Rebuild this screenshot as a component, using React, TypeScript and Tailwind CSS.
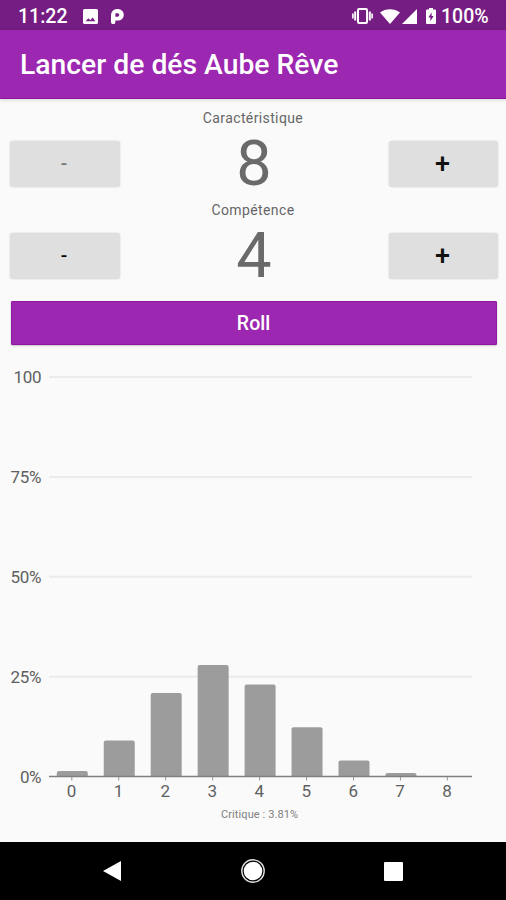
import { useState } from "react";

const PLOT_LEFT = 49;
const PLOT_RIGHT = 472;
const PLOT_TOP = 22;
const PLOT_BOTTOM = 421.5;
const STEP = 46.95;

const odds = [1.4, 9, 20.9, 27.9, 23, 12.3, 4, 0.9, 0];

const gridLines = [
  { label: "100", value: 100, width: 28 },
  { label: "75%", value: 75, width: 31 },
  { label: "50%", value: 50, width: 31 },
  { label: "25%", value: 25, width: 31 },
  { label: "0%", value: 0, width: 21.5 },
];

const yOf = (value: number) => PLOT_BOTTOM - ((PLOT_BOTTOM - PLOT_TOP) * value) / 100;

// Bar with only its top corners rounded
function barPath(x: number, value: number) {
  const y = yOf(value);
  const r = Math.min(2, PLOT_BOTTOM - y);
  return `M${x} ${PLOT_BOTTOM}V${y + r}q0 ${-r} ${r} ${-r}h${31 - 2 * r}q${r} 0 ${r} ${r}V${PLOT_BOTTOM}z`;
}

function StatusBar() {
  return (
    <div className="flex h-[30px] items-center bg-[#751d82] pt-[2px] pl-[18px] text-[19.5px] font-medium text-white">
      <span className="w-[50px] pt-[2px] whitespace-nowrap">11:22</span>
      <svg className="ml-[15px]" width="15" height="15" viewBox="0 0 15 15">
        <path
          fillRule="evenodd"
          fill="#fff"
          d="M1.5 0h12A1.5 1.5 0 0 1 15 1.5v12a1.5 1.5 0 0 1-1.5 1.5h-12A1.5 1.5 0 0 1 0 13.5v-12A1.5 1.5 0 0 1 1.5 0zM2.6 12.2h9.8L9.6 8.6 7.3 11.3 5.4 9.3z"
        />
      </svg>
      <svg className="ml-[13px]" width="13" height="15" viewBox="0 0 13 15" fill="#fff">
        <path
          fillRule="evenodd"
          d="M0 13V6a6 6 0 0 1 6-6h1a5.8 5.8 0 0 1 0 11.6H4.4V13a2.2 2.2 0 0 1-4.4 0zM4.4 4.2v3.6H6.5a1.8 1.8 0 0 0 0-3.6z"
        />
      </svg>
      <svg className="ml-[228px]" width="21" height="16" viewBox="0 0 21 16" fill="none" stroke="#fff">
        <rect x="6" y="1" width="9" height="14" rx="1" strokeWidth="2" />
        <path d="M3.2 3.5v9M17.8 3.5v9" strokeWidth="2" />
        <path d="M.9 5.5v5M20.1 5.5v5" strokeWidth="1.6" />
      </svg>
      <svg className="ml-[7px]" width="20" height="15" viewBox="0 0 20 15" fill="#fff">
        <path d="M0 3.6C5.5-1 14.5-1 20 3.6L10 15z" />
      </svg>
      <svg className="ml-[2px]" width="15" height="15" viewBox="0 0 15 15" fill="#fff">
        <path d="M15 0v15H0z" />
      </svg>
      <svg className="ml-[9px]" width="10" height="16" viewBox="0 0 10 16">
        <path
          fillRule="evenodd"
          fill="#fff"
          d="M3 0h4v1.6h2a1 1 0 0 1 1 1V15a1 1 0 0 1-1 1H1a1 1 0 0 1-1-1V2.6a1 1 0 0 1 1-1h2zM5.6 4.5L2.4 9.6h2v3.6l3.2-5.2h-2z"
        />
      </svg>
      <span className="ml-[5px] pt-[2px]">100%</span>
    </div>
  );
}

type CounterProps = {
  label: string;
  value: number;
  dimMinus?: boolean;
  onChange: (value: number) => void;
};

function Counter({ label, value, dimMinus, onChange }: CounterProps) {
  return (
    <div className="h-[92px]">
      <p className="text-center text-sm leading-[20px] tracking-[0.38px] text-[#666]">{label}</p>
      <div className="flex h-[72px] items-center justify-between pr-[8px] pl-[10px]">
        <button
          onClick={() => onChange(value - 1)}
          className={`h-[46px] w-[110px] rounded-[3px] bg-[#dfdfdf] pr-[2px] text-[19px] font-medium shadow-[0_0_2px_rgba(0,0,0,0.18)] ${dimMinus ? "text-[#777]" : "text-black"}`}
        >
          -
        </button>
        <span className="pr-[1px] pb-[1px] text-[63px] leading-none text-[#6a6a6a]">{value}</span>
        <button
          onClick={() => onChange(value + 1)}
          className="h-[46px] w-[109px] rounded-[3px] bg-[#dfdfdf] pr-[2px] text-[27px] leading-none font-medium text-[#111] shadow-[0_0_2px_rgba(0,0,0,0.18)]"
        >
          +
        </button>
      </div>
    </div>
  );
}

function Chart() {
  return (
    <svg className="mt-[10px] block" width="506" height="487" viewBox="0 0 506 487">
      {gridLines.map(({ label, value, width }) => (
        <g key={label}>
          {value > 0 && (
            <path d={`M${PLOT_LEFT} ${yOf(value)}H${PLOT_RIGHT}`} stroke="#ebebeb" strokeWidth="2" />
          )}
          <text x={41.5 - width} y={yOf(value) + 6.3} textLength={width} fontSize="17" fill="#606060">
            {label}
          </text>
        </g>
      ))}
      {odds.map((value, i) => (
        <g key={i}>
          {value > 0 && <path d={barPath(56.8 + i * STEP, value)} fill="#9c9c9c" />}
          <path d={`M${71.8 + i * STEP} ${PLOT_BOTTOM}v4`} stroke="#999" />
          <text x={71.5 + i * STEP} y="441.5" textAnchor="middle" fontSize="17" fill="#606060">
            {i}
          </text>
        </g>
      ))}
      <path d={`M${PLOT_LEFT} ${PLOT_BOTTOM}H${PLOT_RIGHT}`} stroke="#808080" strokeWidth="1.6" />
      <text x="221" y="462.5" textLength="77" fontSize="11" fill="#808080">
        Critique : 3.81%
      </text>
    </svg>
  );
}

export default function App() {
  const [carac, setCarac] = useState(8);
  const [comp, setComp] = useState(4);

  return (
    <div className="flex h-[900px] w-[506px] flex-col overflow-hidden bg-[#fafafa] font-['Roboto',sans-serif]">
      <StatusBar />
      <header className="flex h-[69px] shrink-0 items-center border-b border-[#8f149f] bg-[#9c27b0] pt-[2px] pl-[20px] shadow-[0_1px_4px_rgba(0,0,0,0.15)]">
        <h1 className="text-[28.3px] font-medium text-white">Lancer de dés Aube Rêve</h1>
      </header>
      <main className="h-[743px] shrink-0 pt-[9px]">
        <Counter label="Caractéristique" value={carac} dimMinus onChange={setCarac} />
        <Counter label="Compétence" value={comp} onChange={setComp} />
        <div className="pt-[9px] pr-[9px] pl-[11px]">
          <button className="h-[44px] w-full rounded-[1px] border border-[#9117a3] bg-[#9c27b0] pt-[1px] pr-[1px] text-[19.5px] font-medium text-white shadow-[0_1px_2px_rgba(0,0,0,0.2)]">
            Roll
          </button>
        </div>
        <Chart />
      </main>
      <nav className="flex h-[58px] shrink-0 items-center justify-between bg-black pr-[103px] pl-[102px]">
        <svg width="20" height="22" viewBox="0 0 20 22" fill="#fff">
          <path d="M19 1v20L1 11z" />
        </svg>
        <svg width="24" height="24" viewBox="0 0 24 24">
          <circle cx="12" cy="12" r="11.2" fill="none" stroke="#ddd" strokeWidth="1.4" />
          <circle cx="12" cy="12" r="9.3" fill="#fff" />
        </svg>
        <span className="h-[19px] w-[19px] rounded-[1px] bg-white" />
      </nav>
    </div>
  );
}
